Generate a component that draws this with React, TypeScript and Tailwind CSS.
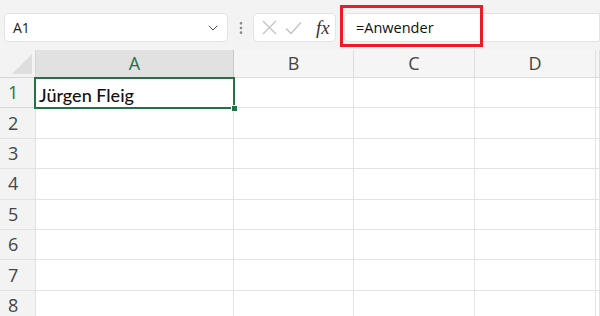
import { ChevronDown, EllipsisVertical } from "lucide-react";

const cols = ["A", "B", "C", "D", ""];
const rows = [1, 2, 3, 4, 5, 6, 7, 8];

function Toolbar() {
  return (
    <div className="relative h-[50px] bg-[#f3f3f3] flex items-start pt-[13px] pl-[4px]">
      <div className="w-[224px] h-[29px] bg-white border border-[#e3e3e3] rounded-[5px] flex items-center justify-between pl-[8px] pr-[6px]">
        <span className="text-[14px] text-[#222]">A1</span>
        <ChevronDown className="w-4 h-4 text-[#555]" strokeWidth={1.5} />
      </div>
      <div className="w-[25px] h-[29px] flex items-center justify-center">
        <EllipsisVertical className="w-4 h-4 text-[#888]" strokeWidth={2} />
      </div>
      <div className="w-[83px] h-[29px] bg-white border border-[#e3e3e3] rounded-[5px] flex items-center pl-[8px]">
        <svg width="15" height="15" viewBox="0 0 15 15">
          <path d="M1 1 L14 14 M14 1 L1 14" stroke="#c2c2c2" strokeWidth="1.3" fill="none" />
        </svg>
        <svg className="ml-[8px]" width="17" height="14" viewBox="0 0 17 14">
          <path d="M1 7.5 L6 12.5 L16 1.5" stroke="#c2c2c2" strokeWidth="1.3" fill="none" />
        </svg>
        <span className="ml-[14px] text-[19px] italic text-[#333] font-['Liberation_Serif',serif] leading-none">fx</span>
      </div>
      <div className="ml-[8px] flex-1 h-[29px] bg-white border border-[#e3e3e3] rounded-l-[5px] flex items-center pl-[11px]">
        <span className="text-[14.5px] text-[#111]">=Anwender</span>
      </div>
      {/* annotation */}
      <div className="absolute left-[340px] top-[5px] w-[143px] h-[42px] border-[3px] border-[#ec1c24]" />
    </div>
  );
}

function Grid() {
  return (
    <div className="grid grid-cols-[36px_198px_120px_121px_121px_1fr]">
      <div className="relative h-[28px] bg-[#f3f3f3] border-r border-b border-[#d6d6d6]">
        <svg className="absolute right-[3px] bottom-[3px]" width="20" height="20" viewBox="0 0 20 20">
          <polygon points="20,0 20,20 0,20" fill="#dedede" />
        </svg>
      </div>
      {cols.map((c, i) => (
        <div
          key={c + i}
          className={
            i === 0
              ? "h-[28px] bg-[#e1e1e1] border-r border-b border-[#c8c8c8] flex items-center justify-center text-[18px] text-[#217346]"
              : "h-[28px] bg-[#f5f5f5] border-r border-b border-[#dedede] flex items-center justify-center text-[18px] text-[#444]"
          }
        >
          {c}
        </div>
      ))}
      {rows.map((r) => (
        <Row key={r} n={r} />
      ))}
    </div>
  );
}

function Row({ n }: { n: number }) {
  return (
    <>
      <div
        className={
          n === 1
            ? "h-[30.4px] bg-[#f3f3f3] border-r border-b border-[#d6d6d6] flex items-center pl-[8px] text-[18px] text-[#217346]"
            : "h-[30.4px] bg-[#f3f3f3] border-r border-b border-[#e1e1e1] flex items-center pl-[8px] text-[18px] text-[#444]"
        }
      >
        {n}
      </div>
      {cols.map((c, i) => (
        <div key={c + i} className="relative h-[30.4px] bg-white border-r border-b border-[#e3e3e3]">
          {n === 1 && i === 0 && (
            <>
              <span className="absolute left-[3px] top-[4px] text-[18px] font-medium text-[#111] font-['Lato',sans-serif]">
                Jürgen Fleig
              </span>
              <div className="absolute z-10 left-[-2px] top-[-1px] right-[-2px] bottom-[-2px] border-2 border-[#217346]" />
              <div className="absolute z-10 right-[-5px] bottom-[-5px] w-[7px] h-[7px] bg-[#217346] border border-white" />
            </>
          )}
        </div>
      ))}
    </>
  );
}

export default function App() {
  return (
    <div className="w-[600px] h-[316px] overflow-hidden bg-white font-['Open_Sans',sans-serif]">
      <Toolbar />
      <Grid />
    </div>
  );
}
